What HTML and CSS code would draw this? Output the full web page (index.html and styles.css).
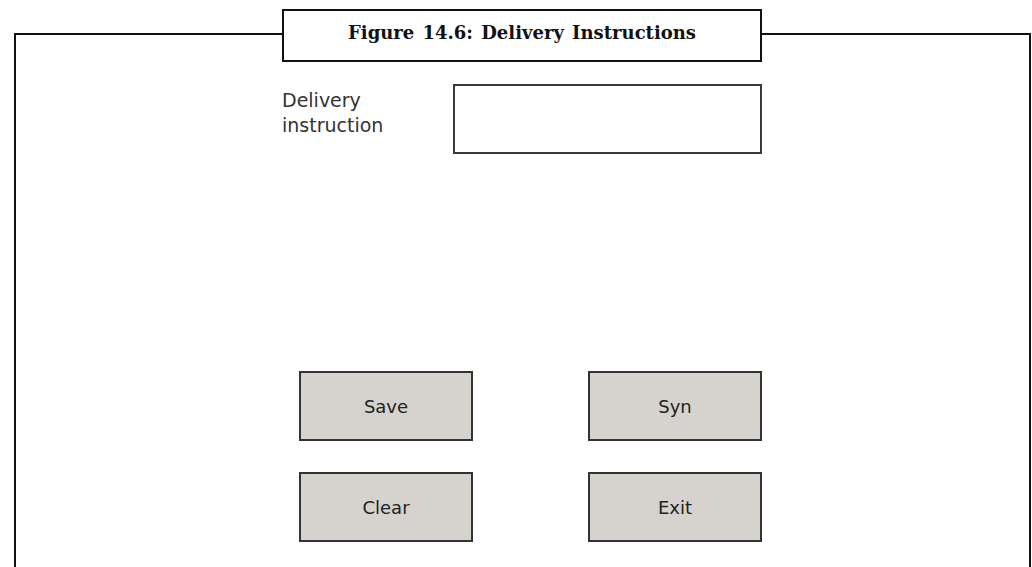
FILE: index.html
```html
<!DOCTYPE html>
<html>
<head>
<meta charset="utf-8">
<link rel="stylesheet" href="styles.css">
</head>
<body>
<div class="frame">
  <div class="title">Figure 14.6: Delivery Instructions</div>
  <div class="content">
    <div class="field-row">
      <div class="label">Delivery<br>instruction</div>
      <div class="input"></div>
    </div>
    <div class="buttons">
      <div class="btn">Save</div>
      <div class="btn">Syn</div>
      <div class="btn">Clear</div>
      <div class="btn">Exit</div>
    </div>
  </div>
</div>
</body>
</html>
```

FILE: styles.css
```css
html, body {
  margin: 0;
  padding: 0;
  background: #fff;
  overflow: hidden;
  height: 567px;
}
.frame {
  margin: 33px 0 0 14px;
  width: 1017px;
  height: 560px;
  padding-left: 266px;
  border: 2px solid #111;
  border-bottom: none;
  box-sizing: border-box;
  display: flex;
  flex-direction: column;
  align-items: flex-start;
}
.title {
  margin-top: -26px;
  width: 480px;
  height: 53px;
  box-sizing: border-box;
  border: 2px solid #111;
  background: #fff;
  font-family: "DejaVu Serif", serif;
  font-weight: bold;
  font-size: 18px;
  word-spacing: 2px;
  color: #111;
  text-align: center;
  padding-top: 11px;
}
.content {
  width: 480px;
  display: flex;
  flex-direction: column;
}
.field-row {
  display: flex;
  justify-content: space-between;
  margin-top: 22px;
}
.label {
  font-family: "DejaVu Sans", sans-serif;
  font-size: 19px;
  line-height: 25px;
  color: #333;
  padding-top: 4px;
}
.input {
  width: 309px;
  height: 70px;
  box-sizing: border-box;
  border: 2px solid #3a3a3a;
  background: #fff;
}
.buttons {
  margin: 217px 0 0 17px;
  display: grid;
  grid-template-columns: 174px 174px;
  column-gap: 115px;
  row-gap: 31px;
}
.btn {
  height: 70px;
  box-sizing: border-box;
  border: 2px solid #333;
  background: #d6d2ce;
  display: flex;
  align-items: center;
  justify-content: center;
  font-family: "DejaVu Sans", sans-serif;
  font-size: 18px;
  color: #222;
}
```
